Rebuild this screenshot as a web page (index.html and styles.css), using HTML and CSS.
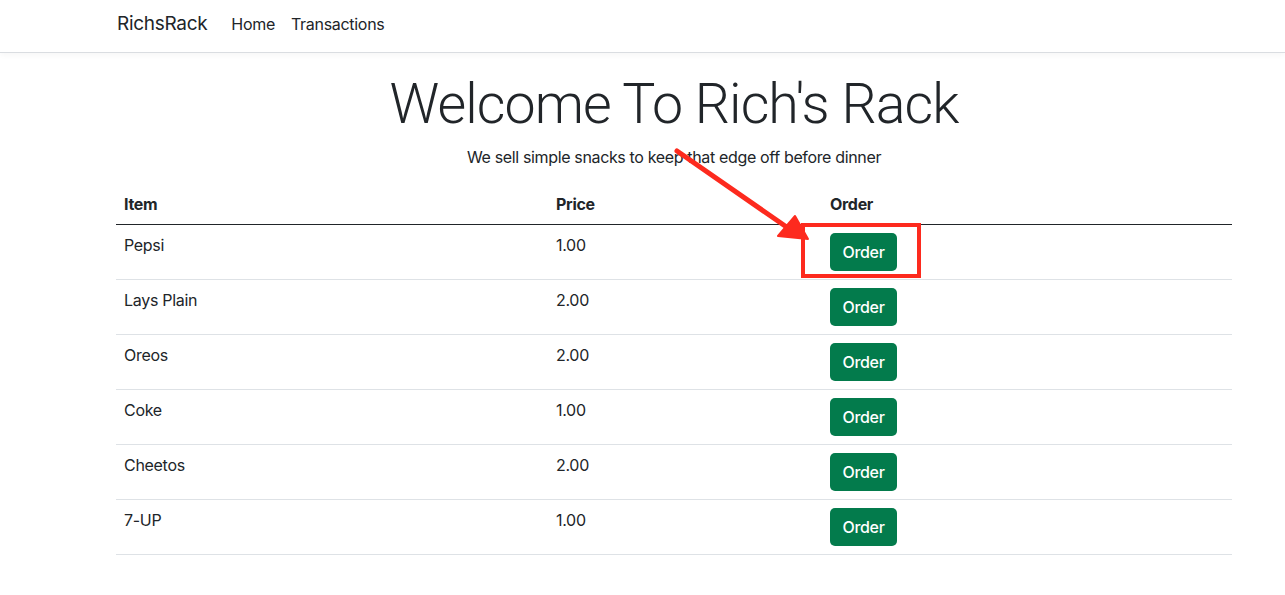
FILE: index.html
```html
<!DOCTYPE html>
<html lang="en">
<head>
<meta charset="utf-8">
<title>RichsRack</title>
<link rel="stylesheet" href="styles.css">
</head>
<body>
<nav class="navbar">
  <div class="container nav-inner">
    <a class="brand" href="#">RichsRack</a>
    <a class="nav-link" href="#">Home</a>
    <a class="nav-link" href="#">Transactions</a>
  </div>
</nav>
<main class="container">
  <h1 class="title">Welcome To Rich's Rack</h1>
  <p class="lead">We sell simple snacks to keep that edge off before dinner</p>
  <table class="table">
    <thead>
      <tr><th class="c1">Item</th><th class="c2">Price</th><th>Order</th></tr>
    </thead>
    <tbody>
      <tr><td>Pepsi</td><td>1.00</td><td><button class="btn">Order</button></td></tr>
      <tr><td>Lays Plain</td><td>2.00</td><td><button class="btn">Order</button></td></tr>
      <tr><td>Oreos</td><td>2.00</td><td><button class="btn">Order</button></td></tr>
      <tr><td>Coke</td><td>1.00</td><td><button class="btn">Order</button></td></tr>
      <tr><td>Cheetos</td><td>2.00</td><td><button class="btn">Order</button></td></tr>
      <tr><td>7-UP</td><td>1.00</td><td><button class="btn">Order</button></td></tr>
    </tbody>
  </table>
</main>
<svg class="annot" width="1285" height="595" viewBox="0 0 1285 595" aria-hidden="true">
  <line x1="677" y1="151" x2="788" y2="228" stroke="#fd2a1e" stroke-width="5" stroke-linecap="round"/>
  <polygon points="808,239 778,236 795,216" fill="#fd2a1e" stroke="#fd2a1e" stroke-width="2" stroke-linejoin="round"/>
  <rect x="803" y="225" width="116" height="51" fill="none" stroke="#fd2a1e" stroke-width="4"/>
</svg>
</body>
</html>
```

FILE: styles.css
```css
* { box-sizing: border-box; }
html, body { margin: 0; padding: 0; }
body {
  font-family: Inter, "Noto Sans", sans-serif;
  font-size: 16px;
  line-height: 1.5;
  color: #212529;
  background: #fff;
  position: relative;
  width: 1285px;
  height: 595px;
  overflow: hidden;
}
.container {
  width: 1116px;
  margin-left: 116px;
}
.navbar {
  height: 53px;
  border-bottom: 1px solid #dadde1;
  box-shadow: 0 2px 6px rgba(0,0,0,0.04);
}
.nav-inner {
  display: flex;
  align-items: center;
  height: 48px;
}
.brand {
  font-size: 19px;
  color: #212529;
  text-decoration: none;
  margin-left: 1px;
  margin-right: 16px;
  letter-spacing: -0.3px;
}
.nav-link {
  color: #212529;
  text-decoration: none;
  padding: 0 8px;
  font-size: 16px;
  letter-spacing: -0.3px;
}
.title {
  margin: 16px 0 0;
  height: 71px;
  text-align: center;
  font-family: Roboto, Inter, sans-serif;
  font-weight: 300;
  font-size: 55.5px;
  line-height: 71px;
  letter-spacing: -0.9px;
}
.lead {
  margin: 5px 0 13px;
  text-align: center;
  font-size: 16px;
  letter-spacing: -0.35px;
}
.table {
  width: 1116px;
  border-collapse: collapse;
}
.table th, .table td {
  text-align: left;
  vertical-align: top;
  padding: 8px;
  letter-spacing: -0.3px;
}
.table th {
  font-weight: 700;
  border-bottom: 1px solid #212529;
  padding-top: 10px;
  padding-bottom: 8px;
}
.table td {
  border-bottom: 1px solid #dee2e6;
  height: 55px;
}
.c1 { width: 432px; }
.c2 { width: 274px; }
.btn {
  font-family: inherit;
  font-size: 16px;
  font-weight: 500;
  letter-spacing: -0.3px;
  color: #fff;
  background: #037b4c;
  border: 0;
  border-radius: 5px;
  height: 38px;
  width: 67px;
  padding: 0;
  line-height: 38px;
  cursor: pointer;
}
.annot {
  position: absolute;
  left: 0;
  top: 0;
  pointer-events: none;
}
```
